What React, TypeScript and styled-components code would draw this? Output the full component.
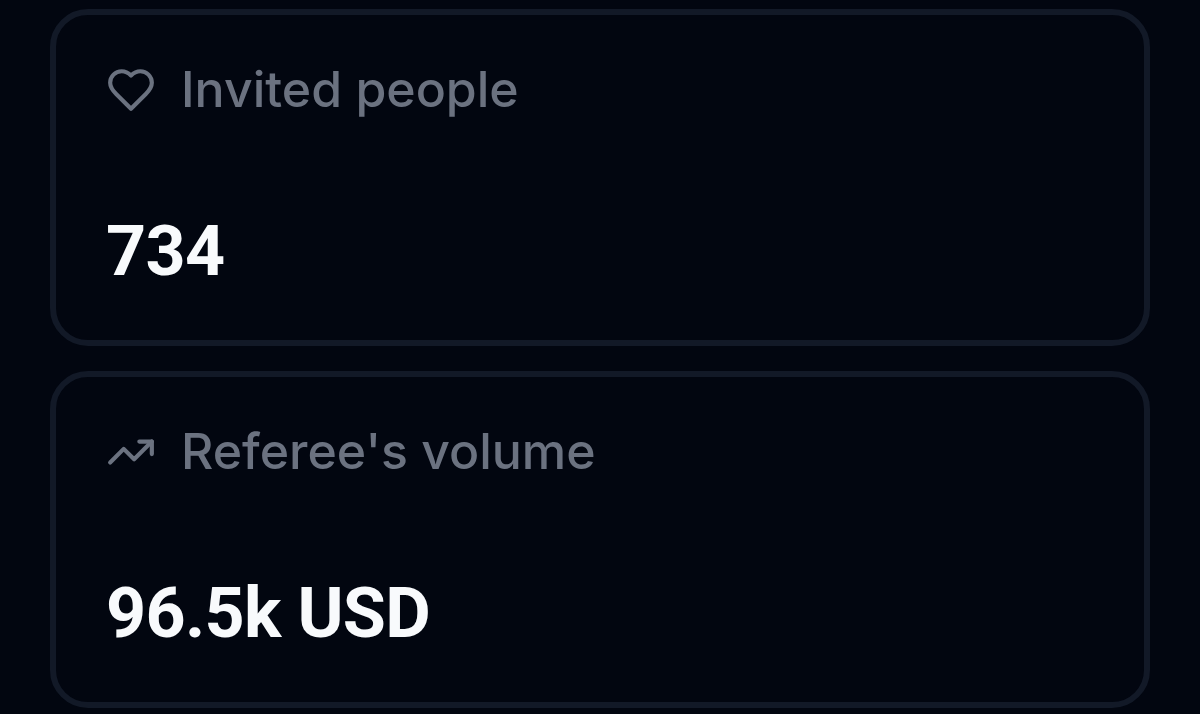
import React from "react";
import styled, { createGlobalStyle } from "styled-components";

interface IStatCard {
  icon: React.ReactNode;
  title: string;
  value: string;
}

const GlobalStyle = createGlobalStyle`
  * {
    box-sizing: border-box;
  }

  body {
    margin: 0;
    background-color: #020610;
    overflow: hidden;
  }
`;

const StyledStats = styled.main`
  display: flex;
  flex-direction: column;
  gap: 25px;
  padding: 9px 50px 0;
`;

const StyledStatCard = styled.section`
  height: 337px;
  border: 6px solid #121927;
  border-radius: 38px;
  padding: 38px 50px 0;
`;

const StyledHeader = styled.div`
  display: flex;
  align-items: center;
  gap: 25px;
  height: 72px;
  color: #6b7280;
`;

const StyledIcon = styled.svg`
  width: 50px;
  height: 50px;
  margin-top: 1px;
  flex-shrink: 0;
  fill: none;
  stroke: currentColor;
  stroke-width: 2;
  stroke-linecap: round;
  stroke-linejoin: round;
`;

const StyledTitle = styled.h3`
  margin: 0;
  font-family: Inter, sans-serif;
  font-weight: 500;
  font-size: 50px;
  line-height: 72px;
`;

const StyledValue = styled.div`
  margin-top: 81px;
  font-family: Roboto, sans-serif;
  font-weight: 700;
  font-size: 70px;
  line-height: 90px;
  letter-spacing: -0.01em;
  color: #f8fafc;
`;

function HeartIcon() {
  return (
    <StyledIcon viewBox="0 0 24 24">
      <path d="M19 14c1.49-1.46 3-3.21 3-5.5A5.5 5.5 0 0 0 16.5 3c-1.76 0-3 .5-4.5 2-1.5-1.5-2.74-2-4.5-2A5.5 5.5 0 0 0 2 8.5c0 2.3 1.5 4.05 3 5.5l7 7Z" />
    </StyledIcon>
  );
}

function TrendingUpIcon() {
  return (
    <StyledIcon viewBox="0 0 24 24">
      <polyline points="22 7 13.5 15.5 8.5 10.5 2 17" />
      <polyline points="16 7 22 7 22 13" />
    </StyledIcon>
  );
}

function StatCard({ icon, title, value }: IStatCard) {
  return (
    <StyledStatCard>
      <StyledHeader>
        {icon}
        <StyledTitle>{title}</StyledTitle>
      </StyledHeader>
      <StyledValue>{value}</StyledValue>
    </StyledStatCard>
  );
}

export default function App() {
  return (
    <>
      <GlobalStyle />
      <StyledStats>
        <StatCard icon={<HeartIcon />} title="Invited people" value="734" />
        <StatCard
          icon={<TrendingUpIcon />}
          title="Referee's volume"
          value="96.5k USD"
        />
      </StyledStats>
    </>
  );
}
